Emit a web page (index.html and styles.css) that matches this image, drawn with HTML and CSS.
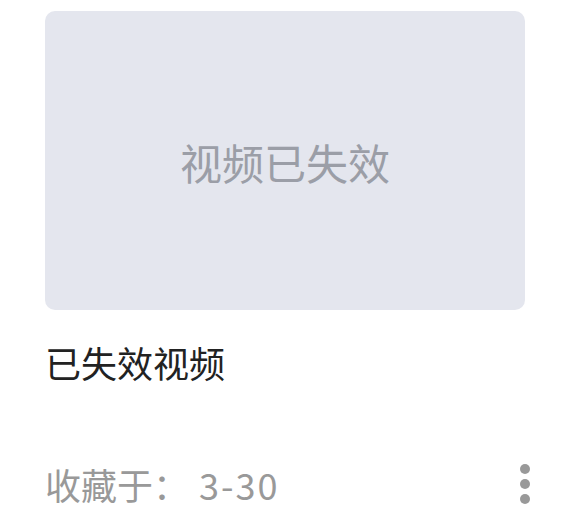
FILE: index.html
```html
<!DOCTYPE html>
<html lang="zh">
<head>
<meta charset="utf-8">
<link rel="stylesheet" href="styles.css">
</head>
<body>
<div class="item">
  <div class="cover"><span class="cover-text">视频已失效</span></div>
  <div class="title">已失效视频</div>
  <div class="meta">
    <span class="fav">收藏于：<span class="date">3-30</span></span>
    <span class="more"><i></i><i></i><i></i></span>
  </div>
</div>
</body>
</html>
```
FILE: styles.css
```css
html, body { margin: 0; padding: 0; background: #fff; }
body { font-family: "Noto Sans CJK SC", "Noto Sans", sans-serif; }
.item { padding: 11px 39px 0 45px; width: 480px; }
.cover {
  height: 299px;
  border-radius: 10px;
  background: #e4e6ee;
  display: flex;
  align-items: center;
  justify-content: center;
}
.cover-text { font-size: 42px; color: #9b9ea7; line-height: 1; margin-top: 2px; }
.title { font-size: 36px; color: #222; line-height: 1; margin-top: 34px; }
.meta {
  display: flex;
  justify-content: space-between;
  align-items: center;
  margin-top: 84px;
}
.fav { font-size: 36px; color: #999; line-height: 1; white-space: pre; }
.date { margin-left: 10px; letter-spacing: 2px; }
.more { display: flex; flex-direction: column; gap: 5px; margin-right: -5px; }
.more i { display: block; width: 10px; height: 10px; border-radius: 50%; background: #999; }
```
